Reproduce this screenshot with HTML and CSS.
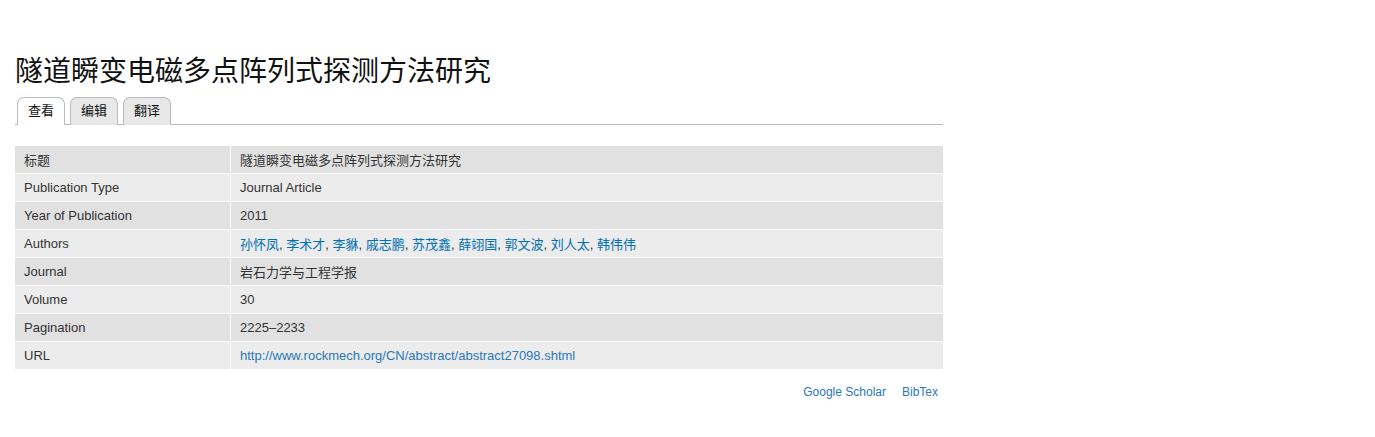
FILE: index.html
```html
<!DOCTYPE html>
<html lang="zh-CN">
<head>
<meta charset="utf-8">
<title>隧道瞬变电磁多点阵列式探测方法研究</title>
<link rel="stylesheet" href="styles.css">
</head>
<body>
<div class="page">
  <h1 class="title">隧道瞬变电磁多点阵列式探测方法研究</h1>
  <ul class="tabs">
    <li class="tab active"><a href="#">查看</a></li>
    <li class="tab"><a href="#">编辑</a></li>
    <li class="tab"><a href="#">翻译</a></li>
  </ul>
  <table class="biblio">
    <tbody>
      <tr><th>标题</th><td>隧道瞬变电磁多点阵列式探测方法研究</td></tr>
      <tr><th>Publication Type</th><td>Journal Article</td></tr>
      <tr><th>Year of Publication</th><td>2011</td></tr>
      <tr><th>Authors</th><td><a href="#">孙怀凤</a>, <a href="#">李术才</a>, <a href="#">李貅</a>, <a href="#">戚志鹏</a>, <a href="#">苏茂鑫</a>, <a href="#">薛翊国</a>, <a href="#">郭文波</a>, <a href="#">刘人太</a>, <a href="#">韩伟伟</a></td></tr>
      <tr><th>Journal</th><td>岩石力学与工程学报</td></tr>
      <tr><th>Volume</th><td>30</td></tr>
      <tr><th>Pagination</th><td>2225–2233</td></tr>
      <tr><th>URL</th><td><a class="url" href="#">http://www.rockmech.org/CN/abstract/abstract27098.shtml</a></td></tr>
    </tbody>
  </table>
  <div class="export">
    <a href="#">Google Scholar</a>
    <a href="#">BibTex</a>
  </div>
</div>
</body>
</html>
```
FILE: styles.css
```css
html, body {
  margin: 0;
  padding: 0;
  background: #fff;
}

body {
  font-family: "Liberation Sans", Arial, "Noto Sans CJK SC", sans-serif;
  color: #333;
}

.page {
  width: 928px;
  padding: 52px 0 0 15px;
}

.title {
  margin: 0;
  font-size: 28px;
  line-height: 35px;
  font-weight: normal;
  color: #111;
  font-family: "Noto Sans CJK SC", sans-serif;
}

/* local task tabs */
.tabs {
  list-style: none;
  margin: 10px 0 0;
  padding: 0 0 0 2px;
  display: flex;
  gap: 5px;
  border-bottom: 1px solid #bbb;
  height: 27px;
}

.tab {
  display: flex;
}

.tab a {
  display: block;
  box-sizing: border-box;
  width: 48px;
  height: 28px;
  border: 1px solid #bbb;
  border-bottom: none;
  border-radius: 7px 7px 0 0;
  background: #e8e8e8;
  color: #111;
  text-decoration: none;
  text-align: center;
  font-family: "Noto Sans CJK SC", sans-serif;
  font-size: 13px;
  line-height: 24px;
}

.tab.active a {
  background: #fff;
}

/* bibliographic record */
.biblio {
  margin-top: 21px;
  width: 928px;
  border-collapse: collapse;
  font-size: 13px;
}

.biblio th,
.biblio td {
  height: 27px;
  padding: 0 9px;
  text-align: left;
  font-weight: normal;
  border-bottom: 1px solid #fff;
  vertical-align: middle;
  color: #333;
}

.biblio tr:last-child th,
.biblio tr:last-child td {
  border-bottom: none;
}

.biblio th {
  width: 197px;
  border-right: 1px solid #fff;
}

.biblio tr:nth-child(odd) th,
.biblio tr:nth-child(odd) td {
  background: #e1e1e1;
}

.biblio tr:nth-child(even) th,
.biblio tr:nth-child(even) td {
  background: #ececec;
}

.biblio a {
  color: #0071b3;
  text-decoration: none;
}

.biblio a.url {
  color: #2a78b8;
}

.export {
  display: flex;
  justify-content: flex-end;
  gap: 16px;
  padding: 15px 5px 0 0;
  font-size: 12px;
  line-height: 16px;
}

.export a {
  color: #2a78b8;
  text-decoration: none;
}
```
